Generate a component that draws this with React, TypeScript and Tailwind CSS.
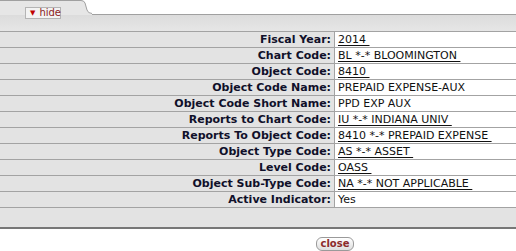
import React from 'react';

type Row = { label: string; value: string; link?: boolean };

const rows: Row[] = [
  { label: 'Fiscal Year:', value: '2014', link: true },
  { label: 'Chart Code:', value: 'BL *-* BLOOMINGTON', link: true },
  { label: 'Object Code:', value: '8410', link: true },
  { label: 'Object Code Name:', value: 'PREPAID EXPENSE-AUX' },
  { label: 'Object Code Short Name:', value: 'PPD EXP AUX' },
  { label: 'Reports to Chart Code:', value: 'IU *-* INDIANA UNIV', link: true },
  { label: 'Reports To Object Code:', value: '8410 *-* PREPAID EXPENSE', link: true },
  { label: 'Object Type Code:', value: 'AS *-* ASSET', link: true },
  { label: 'Level Code:', value: 'OASS', link: true },
  { label: 'Object Sub-Type Code:', value: 'NA *-* NOT APPLICABLE', link: true },
  { label: 'Active Indicator:', value: 'Yes' },
];

export default function App() {
  return (
    <div className="w-[516px] h-[251px] bg-white font-['DejaVu_Sans',Verdana,sans-serif] text-[11px] leading-none">
      {/* tab strip */}
      <div className="flex h-[15px]">
        <div className="relative w-[80px] h-[15px] bg-[#e6e6e6] border-t border-[#a0a0a0]">
          <button className="absolute left-[25px] top-[6px] flex items-center gap-[4px] h-[12px] w-[36px] pl-[4px] border border-[#b4b4b4] bg-[#f3f3f3] text-[10px] text-[#8b1c1c]">
            <span className="text-[#c00000] text-[7px]">▼</span>
            <span>hide</span>
          </button>
        </div>
        <svg width="12" height="15" viewBox="0 0 12 15" className="block">
          <path d="M0 0 H1 Q4 0 5 3 L7 10 Q8 14 12 14 V15 H0 Z" fill="#e6e6e6" />
          <path d="M0 0.5 H1 Q4 0.5 5 3 L7 10 Q8 13.5 12 13.5" fill="none" stroke="#a0a0a0" strokeWidth="1" />
        </svg>
        <div className="flex-1 border-b border-[#a0a0a0]" />
      </div>

      {/* header band */}
      <div className="h-[16px] bg-gradient-to-b from-[#dcdcdc] to-[#e6e6e6]" />

      {/* rows */}
      <div>
        {rows.map((r) => (
          <div key={r.label} className="flex h-[16px] border-t border-[#a3a3a3]">
            <div className="w-[335px] bg-[#e3e3e3] border-r border-[#a3a3a3] flex items-center justify-end pr-[3px] font-bold text-[#10102a]">
              {r.label}
            </div>
            <div className="flex-1 bg-white flex items-center pl-[3px] text-[#111]">
              {r.link ? (
                <span className="underline underline-offset-2 whitespace-pre">{r.value + ' '}</span>
              ) : (
                <span>{r.value}</span>
              )}
            </div>
          </div>
        ))}
      </div>

      {/* footer band */}
      <div className="h-[22px] bg-[#e3e3e3] border-t border-[#a3a3a3] border-b-2 border-b-[#777]" />

      <div className="flex pl-[316px] pt-[8px]">
        <button className="w-[38px] h-[14px] rounded-[6px] border border-[#9a9a9a] bg-gradient-to-b from-white to-[#dedede] text-[10px] font-bold text-[#8b2a2a] flex items-center justify-center">
          close
        </button>
      </div>
    </div>
  );
}
